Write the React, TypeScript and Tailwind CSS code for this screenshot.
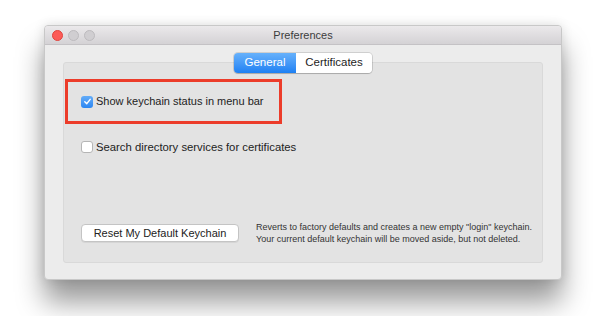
import React from "react";

export default function App() {
  return (
    <div className="w-[600px] h-[316px] bg-white overflow-hidden pt-[25px] pl-[44px]" style={{ fontFamily: '"Liberation Sans", Arial, sans-serif' }}>
      <div className="w-[518px] h-[255px] bg-[#ececec] rounded-[4px] border border-[#c8c8c8] shadow-[0_22px_28px_rgba(0,0,0,0.4),0_0_12px_rgba(0,0,0,0.12)] flex flex-col overflow-hidden">
        <div className="h-[19px] shrink-0 bg-gradient-to-b from-[#ebe9eb] to-[#d4d2d5] border-b border-[#c4c2c5] flex items-center px-[7px] relative">
          <div className="flex gap-[5px]">
            <div className="w-[11px] h-[11px] rounded-full bg-[#fc5b57] border border-[#e0443e]" />
            <div className="w-[11px] h-[11px] rounded-full bg-[#d0ced1] border border-[#bdbbbe]" />
            <div className="w-[11px] h-[11px] rounded-full bg-[#d0ced1] border border-[#bdbbbe]" />
          </div>
          <div className="absolute inset-0 flex items-center justify-center text-[11px] text-[#3c3c3c]">Preferences</div>
        </div>
        <div className="flex-1 pt-[17px] px-[18px] pb-[16px] flex">
          <div className="flex-1 bg-[#e3e3e3] border border-[#d9d9d9] rounded-[3px] flex flex-col pb-[17px]">
            <div className="-mt-[10px] flex justify-center">
              <div className="flex h-[20px] rounded-[4px] shadow-[0_0_0_1px_rgba(0,0,0,0.12),0_1px_1px_rgba(0,0,0,0.15)] overflow-hidden text-[11.5px]">
                <div className="w-[62px] flex items-center justify-center text-white bg-gradient-to-b from-[#66b1fb] to-[#1c80f3]">General</div>
                <div className="w-[76px] flex items-center justify-center text-[#1e1e1e] bg-white">Certificates</div>
              </div>
            </div>
            <div className="mt-[6px] ml-[1px] w-[217px] h-[45px] border-[3px] border-[#ec3c2a] flex items-center pl-[13px] gap-[3px]">
              <div className="w-[12px] h-[12px] shrink-0 rounded-[3px] bg-gradient-to-b from-[#63acf8] to-[#2a86f2] flex items-center justify-center">
                <svg width="9" height="9" viewBox="0 0 10 10"><path d="M2 5.2 L4.2 7.4 L8 2.6" fill="none" stroke="white" strokeWidth="1.6" strokeLinecap="round" strokeLinejoin="round" /></svg>
              </div>
              <span className="text-[11px] text-[#222] whitespace-nowrap">Show keychain status in menu bar</span>
            </div>
            <div className="mt-[15px] ml-[17px] flex items-center gap-[3px]">
              <div className="w-[12px] h-[12px] shrink-0 rounded-[3px] bg-white border border-[#b5b5b5]" />
              <span className="text-[11.3px] text-[#222] whitespace-nowrap">Search directory services for certificates</span>
            </div>
            <div className="flex-1" />
            <div className="ml-[17px] flex items-center gap-[17px]">
              <div className="w-[158px] h-[18px] shrink-0 bg-white rounded-[4px] border border-[#c4c4c4] shadow-[0_1px_0_rgba(0,0,0,0.06)] flex items-center justify-center text-[11px] text-[#222] whitespace-nowrap">Reset My Default Keychain</div>
              <div className="text-[9px] leading-[12px] text-[#333] whitespace-nowrap">
                <div>Reverts to factory defaults and creates a new empty "login" keychain.</div>
                <div>Your current default keychain will be moved aside, but not deleted.</div>
              </div>
            </div>
          </div>
        </div>
      </div>
    </div>
  );
}
